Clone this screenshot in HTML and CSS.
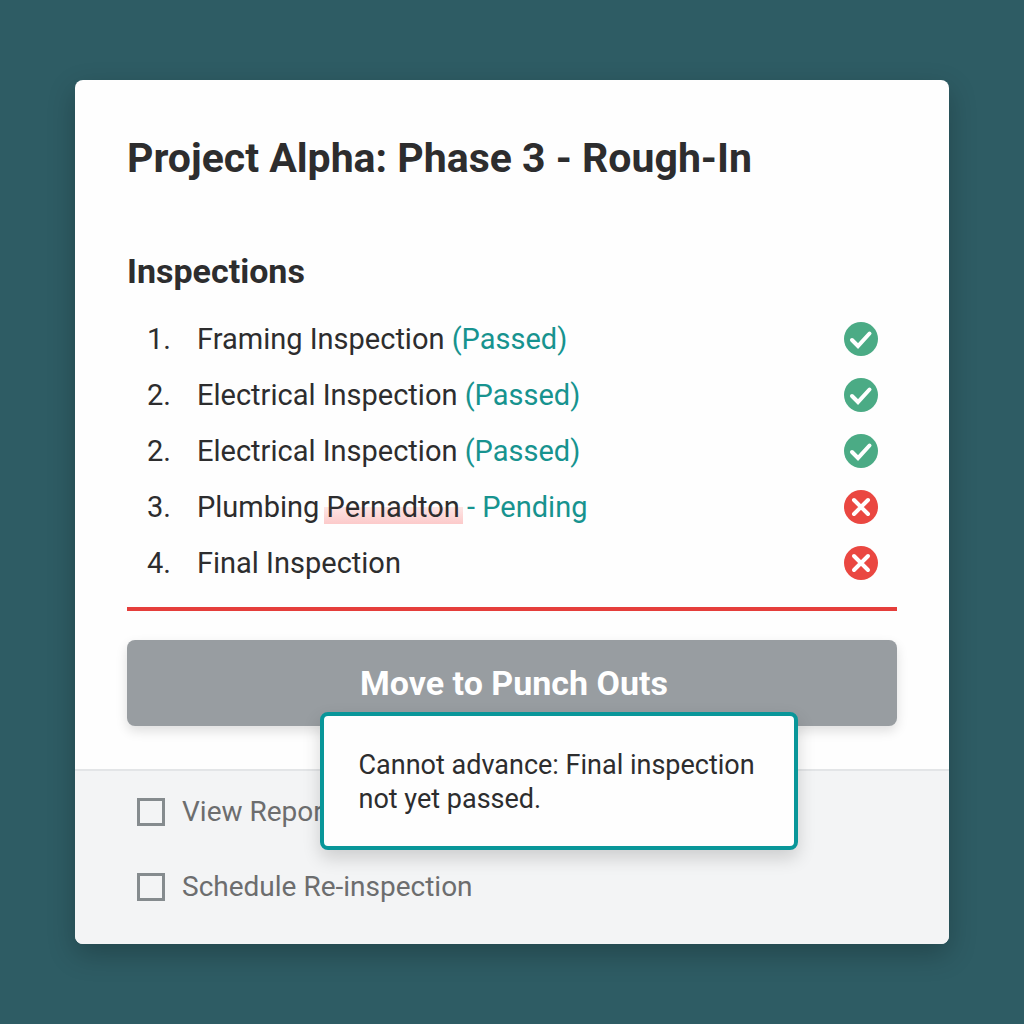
FILE: index.html
```html
<!DOCTYPE html>
<html lang="en">
<head>
<meta charset="utf-8">
<meta name="viewport" content="width=device-width, initial-scale=1">
<title>Project Alpha: Phase 3 - Rough-In</title>
<link rel="stylesheet" href="styles.css">
</head>
<body>
<svg class="sprite" aria-hidden="true">
  <symbol id="icon-pass" viewBox="0 0 34 34">
    <circle cx="17" cy="17" r="17" fill="#4bab85"/>
    <path d="M8 18l6 6L25.500 11.500" fill="none" stroke="#fff" stroke-width="4" stroke-linecap="round" stroke-linejoin="miter"/>
  </symbol>
  <symbol id="icon-fail" viewBox="0 0 34 34">
    <circle cx="17" cy="17" r="17" fill="#ea4741"/>
    <path d="M10 10l14 14M24 10L10 24" fill="none" stroke="#fff" stroke-width="4" stroke-linecap="round"/>
  </symbol>
</svg>
<main class="card">
  <section class="card-main">
    <h1 class="title">Project Alpha: Phase 3 - Rough-In</h1>
    <h2 class="subtitle">Inspections</h2>
    <ul class="inspections">
      <li class="inspection"><span class="number">1.</span><span class="name">Framing Inspection <span class="status">(Passed)</span></span><svg class="icon" role="img" aria-label="Passed"><use href="#icon-pass"/></svg></li>
      <li class="inspection"><span class="number">2.</span><span class="name">Electrical Inspection <span class="status">(Passed)</span></span><svg class="icon" role="img" aria-label="Passed"><use href="#icon-pass"/></svg></li>
      <li class="inspection"><span class="number">2.</span><span class="name">Electrical Inspection <span class="status">(Passed)</span></span><svg class="icon" role="img" aria-label="Passed"><use href="#icon-pass"/></svg></li>
      <li class="inspection"><span class="number">3.</span><span class="name">Plumbing <mark class="flagged">Pernadton</mark> <span class="status">- Pending</span></span><svg class="icon" role="img" aria-label="Not passed"><use href="#icon-fail"/></svg></li>
      <li class="inspection"><span class="number">4.</span><span class="name">Final Inspection</span><svg class="icon" role="img" aria-label="Not passed"><use href="#icon-fail"/></svg></li>
    </ul>
    <div class="advance">
      <button class="advance-button" type="button" aria-disabled="true" aria-describedby="advance-tip">Move to Punch Outs</button>
      <p class="tooltip" id="advance-tip" role="tooltip">Cannot advance: Final inspection not yet passed.</p>
    </div>
  </section>
  <section class="card-footer">
    <label class="option"><input class="checkbox" type="checkbox">View Report</label>
    <label class="option"><input class="checkbox" type="checkbox">Schedule Re-inspection</label>
  </section>
</main>
</body>
</html>
```
FILE: styles.css
```css
* {
  box-sizing: border-box;
}

body {
  margin: 0;
  min-height: 100vh;
  padding: 80px 75px;
  background: #2e5c64;
  color: #2d2d2e;
  font-family: Roboto, "Liberation Sans", sans-serif;
  font-size: 29px;
  line-height: 34px;
}

.sprite {
  position: absolute;
  width: 0;
  height: 0;
}

.card {
  border-radius: 8px;
  background: #fefefe;
  box-shadow: 0 10px 28px rgba(0, 0, 0, 0.24);
}

.card-main {
  padding: 52px 52px 43px;
}

.title {
  margin: 0 0 65px;
  font-size: 41px;
  font-weight: 700;
  line-height: 52px;
}

.subtitle {
  margin: 0 0 18px;
  font-size: 34px;
  font-weight: 700;
  line-height: 44px;
}

.inspections {
  margin: 0 0 29px;
  padding: 0 0 16px;
  border-bottom: 4px solid #e53e3b;
  list-style: none;
}

.inspection {
  display: flex;
  align-items: center;
  min-height: 56px;
  padding: 0 19px 0 20px;
}

.number {
  flex: 0 0 50px;
}

.name {
  flex: 1;
}

.status {
  color: #17938f;
}

.flagged {
  margin: 0 -3px;
  padding: 0 3px;
  background: linear-gradient(transparent 50%, #fde6e5 50%, #fccaca);
  color: inherit;
}

.icon {
  flex: none;
  width: 34px;
  height: 34px;
}

.advance {
  position: relative;
}

.advance-button {
  display: block;
  width: 100%;
  min-height: 86px;
  padding: 0 0 0 4px;
  border: 0;
  border-radius: 8px;
  background: #989da1;
  box-shadow: 0 5px 12px rgba(0, 0, 0, 0.13);
  color: #fff;
  font: inherit;
  font-size: 34px;
  font-weight: 700;
  cursor: not-allowed;
}

.tooltip {
  position: absolute;
  top: 72px;
  left: 25%;
  width: 478px;
  margin: 0;
  padding: 32px 32px 30px 35px;
  border: 4px solid #099699;
  border-radius: 8px;
  background: #fefefe;
  box-shadow: 0 8px 18px rgba(0, 0, 0, 0.16);
  font-size: 27px;
}

.card-footer {
  display: grid;
  gap: 41px;
  padding: 24px 62px 40px;
  border-top: 2px solid #e3e5e7;
  border-radius: 0 0 8px 8px;
  background: #f3f4f5;
  color: #6c6d6e;
  font-size: 28px;
}

.option {
  display: flex;
  align-items: center;
  gap: 17px;
}

.checkbox {
  appearance: none;
  width: 28px;
  height: 28px;
  margin: 0;
  border: 3px solid #858b8e;
  background: transparent;
}

.checkbox:checked {
  background: #858b8e;
}
```
